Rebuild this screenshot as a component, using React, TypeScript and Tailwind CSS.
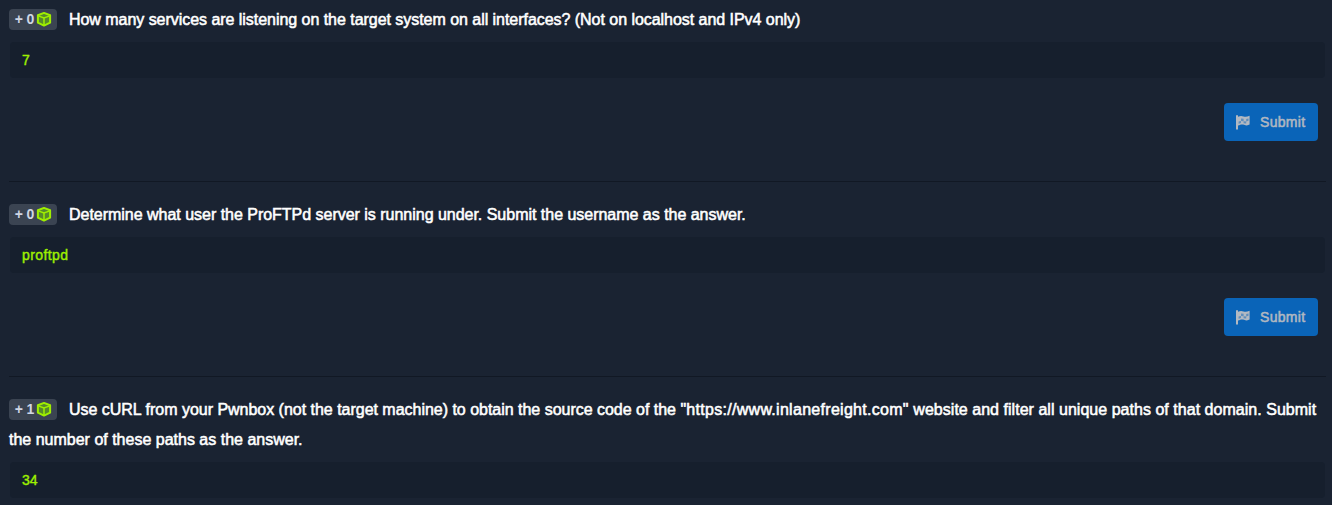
import React from "react";

function Cube() {
  return (
    <svg viewBox="0 0 16 16" className="ml-0.5 h-4 w-4 shrink-0" fill="none">
      <path d="M8 1.9 14.1 4.2v7.5L8 14.6 1.9 11.7V4.2Z" fill="#568a2b" />
      <path d="M8 1.9 14.1 4.2v7.5L8 14.6 1.9 11.7V4.2Z" stroke="#9fef00" strokeWidth="2" strokeLinejoin="round" />
      <path d="M2.2 4.9 8 7l5.8-2.1M8 7v7.2" stroke="#9fef00" strokeWidth="1.5" />
    </svg>
  );
}

function CheckeredFlag() {
  return (
    <svg viewBox="0 0 14 15" className="h-[15px] w-3.5 shrink-0" fill="#b3b9c2">
      <path d="M0 .8Q0 0 1 0t1 .8V14.5H0Z" />
      <path d="M2 1.8C4.5.6 5.8.9 7.5 1.5S11 2 13.6.8V9.6C11.5 10.8 9.8 10.4 8 9.8S4.6 9.4 2 10.6Z" />
      <path d="M5 3.5 7.6 3.8V6.2L5 5.9ZM7.6 6.2 10.2 6.4V8.6L7.6 8.2ZM10.2 3.9 12.5 3.4V5.8L10.2 6.4ZM2.6 6.4 5 5.9V8.1L2.6 8.7Z" fill="#0a64b8" fillOpacity=".5" />
    </svg>
  );
}

type Segment = { text: string; tracking: string };

function Question({ points, lines, answer, submit }: { points: number; lines: Segment[][]; answer: string; submit?: boolean }) {
  return (
    <section className={submit ? "h-[195px]" : ""}>
      <div className="pt-1">
        {lines.map((segments, i) => (
          <div key={i} className="flex h-[30px] items-center">
            {i === 0 && (
              <span className="mr-3 flex h-[21px] w-12 shrink-0 items-center rounded bg-[#3b4452] pl-[5px] text-[14px] font-bold text-[#cfd6e4]">
                <span className="w-5 whitespace-pre text-right tracking-[-0.2px]">+ {points}</span>
                <Cube />
              </span>
            )}
            <p className="whitespace-pre pt-0.5 text-base text-white [-webkit-text-stroke:0.55px_white]">
              {segments.map((s, j) => (
                <span key={j} className={s.tracking}>{s.text}</span>
              ))}
            </p>
          </div>
        ))}
      </div>
      <div className="ml-px mr-px mt-2 flex h-9 items-center rounded bg-[#161f2d] px-3 text-sm text-[#9fef00] [-webkit-text-stroke:0.4px_#9fef00]">
        <span className={answer.length > 2 ? "tracking-[0.4px]" : ""}>{answer}</span>
      </div>
      {submit && (
        <>
          <div className="mt-[25px] flex justify-end pr-2">
            <button className="flex h-[38px] w-[94px] items-center gap-2.5 rounded bg-[#0a64b8] pl-3 text-sm text-[#b0b7c1] [-webkit-text-stroke:0.55px_#b0b7c1]">
              <CheckeredFlag />
              <span className="tracking-[0.3px]">Submit</span>
            </button>
          </div>
          <div className="mt-10 h-px bg-[#111824]" />
        </>
      )}
    </section>
  );
}

export default function App() {
  return (
    <main className="h-[505px] overflow-hidden bg-[#1a2332] pl-[9px] pr-[6px] font-['Liberation_Sans',sans-serif]">
      <Question points={0} answer="7" submit lines={[[{ text: "How many services are listening on the target system on all interfaces? (Not on localhost and IPv4 only)", tracking: "tracking-[-0.04px]" }]]} />
      <Question points={0} answer="proftpd" submit lines={[[{ text: "Determine what user the ProFTPd server is running under. Submit the username as the answer.", tracking: "tracking-[-0.02px]" }]]} />
      <Question
        points={1}
        answer="34"
        lines={[
          [
            { text: "Use cURL from your Pwnbox (not the target machine) to obtain the source code of the ", tracking: "tracking-[-0.02px]" },
            { text: "\"https://www.inlanefreight.com\"", tracking: "tracking-[0.29px]" },
            { text: " website and filter all unique paths of that domain. Submit", tracking: "tracking-[0.03px]" },
          ],
          [{ text: "the number of these paths as the answer.", tracking: "tracking-normal" }],
        ]}
      />
    </main>
  );
}
